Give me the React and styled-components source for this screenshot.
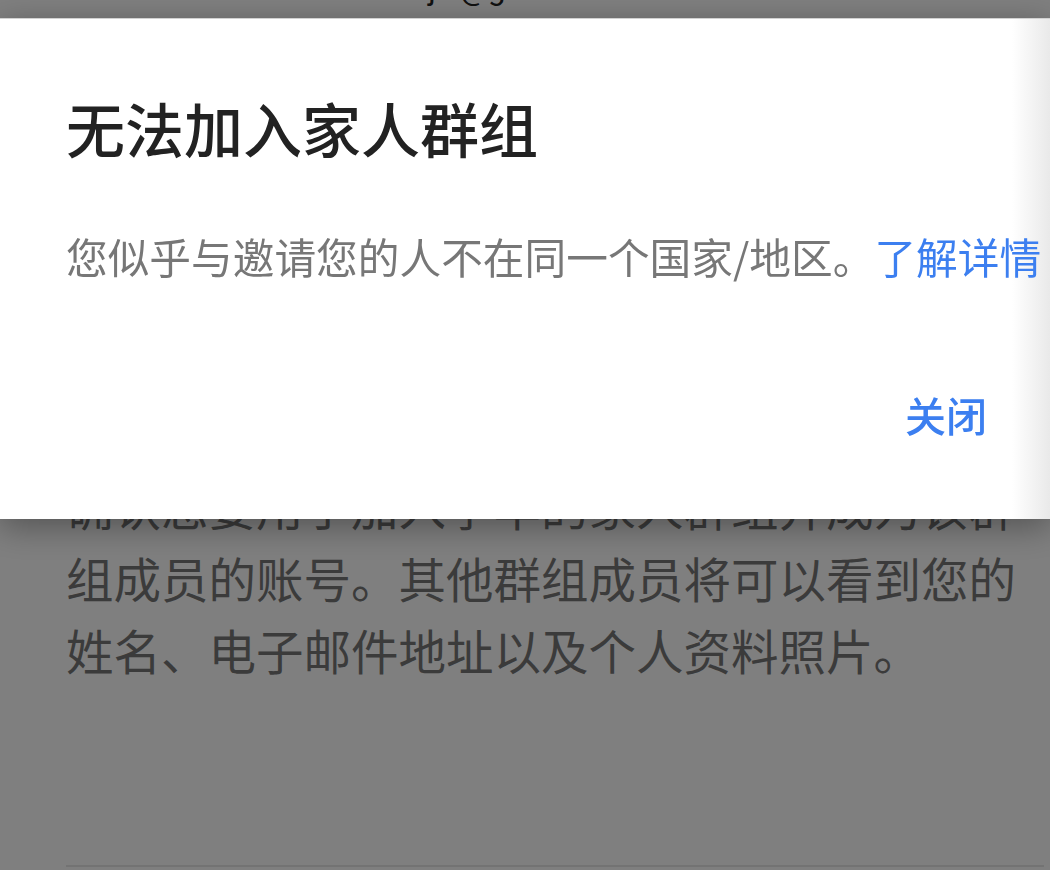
import React from 'react';
import styled, { createGlobalStyle } from 'styled-components';

const GlobalStyle = createGlobalStyle`
  html, body {
    margin: 0;
    padding: 0;
    background: #ffffff;
    overflow: hidden;
  }
  body {
    font-family: "Noto Sans CJK SC", "Noto Sans", sans-serif;
  }
`;

const Page = styled.div`
  height: 870px;
  padding: 0 6px 0 66px;
  display: flex;
  flex-direction: column;
`;

const Account = styled.div`
  margin-top: -25px;
  margin-left: 288px;
  font-family: Roboto, "Noto Sans", sans-serif;
  font-size: 31px;
  line-height: 30px;
  color: #222;
  white-space: nowrap;
`;

const Intro = styled.div`
  margin-top: 465px;
  font-size: 47.5px;
  line-height: 72px;
  color: #777777;
`;

const Line = styled.div`
  white-space: nowrap;
`;

const Divider = styled.div`
  margin-top: 179px;
  height: 2px;
  background: #e6e6e6;
`;

const Scrim = styled.div`
  position: fixed;
  inset: 0;
  background: rgba(0, 0, 0, 0.5);
`;

const Dialog = styled.div`
  position: fixed;
  top: 18px;
  left: 0;
  right: 0;
  height: 501px;
  box-sizing: border-box;
  padding: 79px 63px 0 66px;
  border-top: 1px solid #d2d2d2;
  background: linear-gradient(to right, #ffffff calc(100% - 38px), #e9e9e9);
  box-shadow: 0 8px 32px rgba(0, 0, 0, 0.35);
  display: flex;
  flex-direction: column;
`;

const Title = styled.h1`
  margin: 0;
  font-size: 59px;
  line-height: 60px;
  font-weight: 500;
  color: #222222;
  white-space: nowrap;
`;

const Message = styled.p`
  margin: 78px 0 0;
  font-size: 41.7px;
  line-height: 41.5px;
  color: #777777;
  white-space: nowrap;
`;

const Link = styled.a`
  color: #3c7ff0;
  text-decoration: none;
`;

const Actions = styled.div`
  margin-top: 116px;
  display: flex;
  justify-content: flex-end;
`;

const TextButton = styled.button`
  border: 0;
  padding: 0;
  background: none;
  font-family: inherit;
  font-size: 41px;
  line-height: 41px;
  font-weight: 500;
  color: #3c7ff0;
  cursor: pointer;
`;

export default function App() {
  return (
    <>
      <GlobalStyle />
      <Page>
        <Account>lihua.jia@gmail.com</Account>
        <Intro>
          <Line>确认您要用于加入李华的家人群组并成为该群</Line>
          <Line>组成员的账号。其他群组成员将可以看到您的</Line>
          <Line>姓名、电子邮件地址以及个人资料照片。</Line>
        </Intro>
        <Divider />
      </Page>
      <Scrim />
      <Dialog role="dialog">
        <Title>无法加入家人群组</Title>
        <Message>
          您似乎与邀请您的人不在同一个国家/地区。<Link href="#">了解详情</Link>
        </Message>
        <Actions>
          <TextButton>关闭</TextButton>
        </Actions>
      </Dialog>
    </>
  );
}
